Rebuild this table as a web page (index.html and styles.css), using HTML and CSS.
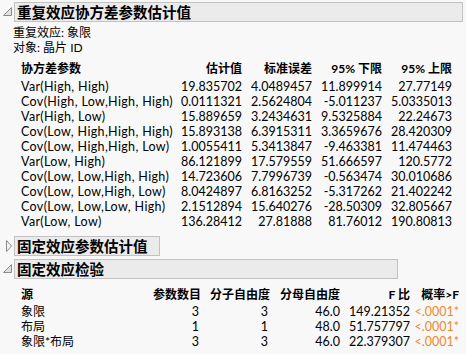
FILE: index.html
```html
<!DOCTYPE html>
<html lang="zh">
<head>
<meta charset="utf-8">
<link rel="stylesheet" href="styles.css">
</head>
<body>
<div class="report">
  <div class="outline">
    <div class="ohead">
      <svg class="tri" width="10" height="10" viewBox="0 0 10 10"><path d="M0.5 8.5 L8.5 0.5 L8.5 8.5 Z" fill="#e0e0e0" stroke="#8a8a8a" stroke-width="1"/></svg>
      <div class="obox wide">重复效应协方差参数估计值</div>
    </div>
    <div class="info">
      <div>重复效应: 象限</div>
      <div>对象: 晶片 ID</div>
    </div>
    <div class="grid t1">
      <div class="h l">协方差参数</div><div class="h">估计值</div><div class="h">标准误差</div><div class="h">95% 下限</div><div class="h">95% 上限</div>
      <div class="l">Var(High, High)</div><div>19.835702</div><div>4.0489457</div><div>11.899914</div><div>27.77149</div>
      <div class="l">Cov(High, Low,High, High)</div><div>0.0111321</div><div>2.5624804</div><div>-5.011237</div><div>5.0335013</div>
      <div class="l">Var(High, Low)</div><div>15.889659</div><div>3.2434631</div><div>9.5325884</div><div>22.24673</div>
      <div class="l">Cov(Low, High,High, High)</div><div>15.893138</div><div>6.3915311</div><div>3.3659676</div><div>28.420309</div>
      <div class="l">Cov(Low, High,High, Low)</div><div>1.0055411</div><div>5.3413847</div><div>-9.463381</div><div>11.474463</div>
      <div class="l">Var(Low, High)</div><div>86.121899</div><div>17.579559</div><div>51.666597</div><div>120.5772</div>
      <div class="l">Cov(Low, Low,High, High)</div><div>14.723606</div><div>7.7996739</div><div>-0.563474</div><div>30.010686</div>
      <div class="l">Cov(Low, Low,High, Low)</div><div>8.0424897</div><div>6.8163252</div><div>-5.317262</div><div>21.402242</div>
      <div class="l">Cov(Low, Low,Low, High)</div><div>2.1512894</div><div>15.640276</div><div>-28.50309</div><div>32.805667</div>
      <div class="l">Var(Low, Low)</div><div>136.28412</div><div>27.81888</div><div>81.76012</div><div>190.80813</div>
    </div>
  </div>
  <div class="outline second">
    <div class="ohead">
      <svg class="tri" width="10" height="14" viewBox="0 0 10 14"><path d="M3.5 1.5 L8.5 7 L3.5 12.5 Z" fill="#f4f4f4" stroke="#8a8a8a" stroke-width="1"/></svg>
      <div class="obox">固定效应参数估计值</div>
    </div>
  </div>
  <div class="outline third">
    <div class="ohead">
      <svg class="tri" width="10" height="10" viewBox="0 0 10 10"><path d="M0.5 8.5 L8.5 0.5 L8.5 8.5 Z" fill="#e0e0e0" stroke="#8a8a8a" stroke-width="1"/></svg>
      <div class="obox mid">固定效应检验</div>
    </div>
    <div class="grid t2">
      <div class="h l">源</div><div class="h">参数数目</div><div class="h">分子自由度</div><div class="h">分母自由度</div><div class="h">F 比</div><div class="h">概率&gt;F</div>
      <div class="l">象限</div><div class="n">3</div><div class="n">3</div><div>46.0</div><div>149.21352</div><div class="p">&lt;.0001*</div>
      <div class="l">布局</div><div class="n">1</div><div class="n">1</div><div>48.0</div><div>51.757797</div><div class="p">&lt;.0001*</div>
      <div class="l">象限*布局</div><div class="n">3</div><div class="n">3</div><div>46.0</div><div>22.379307</div><div class="p">&lt;.0001*</div>
    </div>
  </div>
</div>
</body>
</html>
```
FILE: styles.css
```css
html, body {
  margin: 0;
  padding: 0;
  background: #f8f8f8;
}
body {
  font-family: Lato, "Noto Sans CJK SC", sans-serif;
  font-size: 12.5px;
  color: #000;
  width: 466px;
  height: 354px;
  overflow: hidden;
}
.report {
  padding-top: 2px;
}
.ohead {
  display: flex;
  align-items: center;
  height: 20px;
}
.tri {
  width: 10px;
  margin-left: 3px;
  margin-right: 1px;
  flex: none;
}
.obox {
  box-sizing: border-box;
  height: 20px;
  border: 1px solid #c2c2c2;
  background: #ebebeb;
  font-family: "Noto Sans CJK SC", sans-serif;
  font-weight: bold;
  font-size: 14.5px;
  line-height: 18px;
  padding-left: 2px;
  color: #000;
  width: 146px;
  overflow: hidden;
}
.obox.wide { width: 449px; }
.obox.mid { width: 384px; }
.info {
  margin-left: 13px;
  margin-top: 3px;
  font-size: 12px;
}
.info > div {
  height: 15px;
  line-height: 15px;
}
.grid {
  display: grid;
  margin-left: 21px;
  line-height: 15px;
  grid-auto-rows: 15px;
}
.grid > div {
  text-align: right;
  white-space: nowrap;
  height: 15px;
}
.grid > .l {
  text-align: left;
  letter-spacing: 0.35px;
}
.grid > .h {
  font-weight: bold;
  font-size: 12px;
  letter-spacing: 0;
}
.t1 {
  grid-template-columns: 160px 61px 70px 70px 70px;
  grid-template-rows: 18px;
  margin-top: 6px;
}
.second { margin-top: 7px; }
.third { margin-top: 3px; }
.t2 {
  grid-template-columns: 111px 69px 69px 70px 70px 49px;
  grid-template-rows: 17px;
  margin-top: 8px;
}
.t2 > .l { font-size: 12px; letter-spacing: 0; }
.t2 > .n { padding-right: 2px; }
.p { color: #f0892a; }
```
